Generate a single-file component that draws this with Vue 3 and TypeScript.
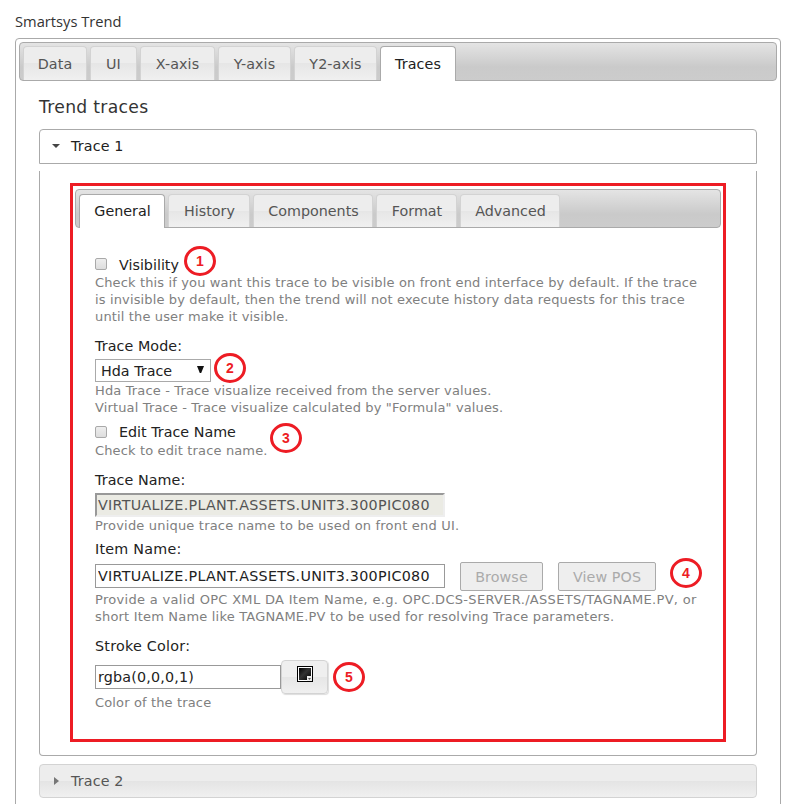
<script setup lang="ts">
import { ref } from 'vue'

interface Tab {
  label: string
  width: number
}

interface Marker {
  id: number
  left: number
  top: number
}

const mainTabs: Tab[] = [
  { label: 'Data', width: 64 },
  { label: 'UI', width: 47 },
  { label: 'X-axis', width: 75 },
  { label: 'Y-axis', width: 73 },
  { label: 'Y2-axis', width: 83 },
  { label: 'Traces', width: 76 },
]
const traceTabs: Tab[] = [
  { label: 'General', width: 86 },
  { label: 'History', width: 82 },
  { label: 'Components', width: 120 },
  { label: 'Format', width: 81 },
  { label: 'Advanced', width: 100 },
]
const markers: Marker[] = [
  { id: 1, left: 111, top: 60 },
  { id: 2, left: 141, top: 167 },
  { id: 3, left: 197, top: 237 },
  { id: 4, left: 597, top: 372 },
  { id: 5, left: 260, top: 476 },
]

const activeMain = ref('Traces')
const activeTrace = ref('General')
const visible = ref(false)
const editName = ref(false)
const traceName = ref('VIRTUALIZE.PLANT.ASSETS.UNIT3.300PIC080')
const itemName = ref('VIRTUALIZE.PLANT.ASSETS.UNIT3.300PIC080')
const strokeColor = ref('rgba(0,0,0,1)')
</script>

<template>
  <div class="page">
    <div class="title">Smartsys Trend</div>
    <div class="panel">
      <div class="tabs">
        <div
          v-for="t in mainTabs"
          :key="t.label"
          class="tab"
          :class="{ active: t.label === activeMain }"
          :style="{ width: t.width + 'px' }"
          @click="activeMain = t.label"
        >{{ t.label }}</div>
      </div>
      <div class="body">
        <h2 class="heading">Trend traces</h2>
        <div class="acc-head open">
          <svg class="arrow" width="8" height="4" viewBox="0 0 8 4"><path d="M0 0h8L4 4z" fill="#454545" /></svg>
          <span>Trace 1</span>
        </div>
        <div class="acc-body">
          <div class="frame">
            <div class="tabs">
              <div
                v-for="t in traceTabs"
                :key="t.label"
                class="tab"
                :class="{ active: t.label === activeTrace }"
                :style="{ width: t.width + 'px' }"
                @click="activeTrace = t.label"
              >{{ t.label }}</div>
            </div>
            <div class="form">
              <label class="check"><input v-model="visible" type="checkbox"><span>Visibility</span></label>
              <p class="hint">
                Check this if you want this trace to be visible on front end interface by default. If the trace<br>
                is invisible by default, then the trend will not execute history data requests for this trace<br>
                until the user make it visible.
              </p>
              <div class="label mode">Trace Mode:</div>
              <div class="select">
                <span>Hda Trace</span>
                <svg width="7" height="7" viewBox="0 0 7 7"><path d="M0 0h7L4.2 7H2.8z" fill="#111" /></svg>
              </div>
              <p class="hint">
                Hda Trace - Trace visualize received from the server values.<br>
                Virtual Trace - Trace visualize calculated by "Formula" values.
              </p>
              <label class="check edit"><input v-model="editName" type="checkbox"><span>Edit Trace Name</span></label>
              <p class="hint">Check to edit trace name.</p>
              <div class="label name">Trace Name:</div>
              <input v-model="traceName" class="text wide locked" type="text" disabled>
              <p class="hint mid">Provide unique trace name to be used on front end UI.</p>
              <div class="label item">Item Name:</div>
              <div class="row">
                <input v-model="itemName" class="text wide" type="text">
                <button class="btn browse" disabled>Browse</button>
                <button class="btn view" disabled>View POS</button>
              </div>
              <p class="hint mid">
                <span class="caps">Provide a valid OPC XML DA Item Name, e.g. OPC.DCS-SERVER./ASSETS/TAGNAME.PV, or</span><br>
                short Item Name like TAGNAME.PV to be used for resolving Trace parameters.
              </p>
              <div class="label stroke">Stroke Color:</div>
              <div class="color-row">
                <input v-model="strokeColor" class="text color" type="text">
                <button class="picker" aria-label="Pick color">
                  <svg width="16" height="16" viewBox="0 0 16 16">
                    <defs>
                      <linearGradient id="shade" x1="0" y1="0" x2="1" y2="1">
                        <stop offset="0" stop-color="#000" />
                        <stop offset=".45" stop-color="#333" />
                        <stop offset="1" stop-color="#000" />
                      </linearGradient>
                    </defs>
                    <path d="M0 0h16v16H0z" fill="#000" />
                    <path d="M1 1h14v14H1z" fill="#fff" />
                    <path d="M2 2h12v12H2z" fill="url(#shade)" />
                    <path d="M10 10h5v5h-5z" fill="#eee" />
                    <path d="M11 12h3l-1.5 2z" fill="#555" />
                  </svg>
                </button>
              </div>
              <p class="hint">Color of the trace</p>
            </div>
            <div
              v-for="m in markers"
              :key="m.id"
              class="marker"
              :style="{ left: m.left + 'px', top: m.top + 'px' }"
            >{{ m.id }}</div>
          </div>
        </div>
        <div class="acc-head">
          <svg class="arrow side" width="5" height="8" viewBox="0 0 5 8"><path d="M0 0l5 4-5 4z" fill="#777" /></svg>
          <span>Trace 2</span>
        </div>
      </div>
    </div>
  </div>
</template>

<style>
body {
  margin: 0;
  background: #fff;
  overflow: hidden;
}
</style>

<style scoped>
.page,
.page * {
  box-sizing: border-box;
}
.page {
  height: 804px;
  padding: 0 10px 0 15px;
  overflow: hidden;
  font: 14.3px/20px "DejaVu Sans", Verdana, sans-serif;
  color: #222;
}
.title {
  height: 38px;
  padding-top: 11px;
  font: 14.7px/20px "Open Sans", "Noto Sans", sans-serif;
  color: #333;
}
.panel {
  height: 820px;
  padding: 3px;
  border: 1px solid #aaa;
  border-radius: 4px;
}
.tabs {
  display: flex;
  align-items: flex-start;
  gap: 3px;
  height: 39px;
  padding: 3px 3px 0;
  border: 1px solid #aaa;
  border-radius: 4px;
  background: linear-gradient(#e4e4e4, #cacaca 65%, #cccccc);
}
.tab {
  flex: none;
  height: 34px;
  border: 1px solid #d3d3d3;
  border-bottom: 0;
  border-radius: 4px 4px 0 0;
  background: linear-gradient(#ededed 0 50%, #e6e6e6 50%, #f0f0f0);
  color: #555;
  letter-spacing: 0.1px;
  line-height: 34px;
  text-align: center;
  white-space: nowrap;
}
.tab.active {
  height: 35px;
  border-color: #aaa;
  background: #fff;
  color: #212121;
}
.body {
  padding: 15px 20px 0;
}
.heading {
  height: 33px;
  margin: 0;
  font-size: 17.2px;
  font-weight: 400;
  letter-spacing: 0.3px;
  line-height: 22px;
  color: #333;
}
.acc-head {
  display: flex;
  align-items: center;
  height: 34px;
  margin-top: 8px;
  padding-left: 12px;
  border: 1px solid #d3d3d3;
  border-radius: 4px;
  background: linear-gradient(#ededed 0 50%, #e4e4e4 50%, #f0f0f0);
  color: #555;
  letter-spacing: 0.15px;
}
.acc-head.open {
  height: 35px;
  margin: 0;
  padding-bottom: 1px;
  border-color: #aaa;
  border-radius: 4px 4px 0 0;
  background: #fff;
  color: #212121;
}
.arrow {
  margin-right: 11px;
}
.arrow.side {
  margin: 0 12px 0 2px;
}
.acc-body {
  height: 585px;
  margin-top: 7px;
  padding: 12px 30px 0;
  border: 1px solid #aaa;
  border-top: 0;
  border-radius: 0 0 4px 4px;
}
.frame {
  position: relative;
  height: 559px;
  padding: 3px 2px 0;
  border: 3px solid #ed1c24;
}
.frame .tabs {
  padding-top: 4px;
}
.frame .tab {
  height: 33px;
  padding-left: 1px;
  letter-spacing: 0;
  line-height: 32px;
}
.frame .tab.active {
  height: 34px;
}
.form {
  padding: 27px 20px 0;
}
.check {
  display: flex;
  align-items: center;
  height: 19px;
  padding-bottom: 2px;
}
.check input {
  appearance: none;
  width: 12px;
  height: 12px;
  margin: 0 12px 0 0;
  border: 1px solid #a9a9a9;
  border-radius: 2px;
  background: linear-gradient(#eee, #ddd);
}
.check.edit {
  height: 20px;
  margin-top: 6px;
  padding: 0;
}
.check span {
  padding-top: 2px;
}
.check.edit span {
  padding: 0;
}
.hint {
  margin: 0;
  font-size: 13px;
  letter-spacing: 0.14px;
  line-height: 17px;
  color: #808080;
  white-space: nowrap;
}
.hint.mid {
  letter-spacing: 0.19px;
}
.hint .caps {
  letter-spacing: 0.31px;
}
.label {
  height: 20px;
  letter-spacing: 0.08px;
}
.mode {
  height: 23px;
  margin-top: 11px;
}
.name {
  height: 23px;
  margin-top: 11px;
}
.item {
  height: 23px;
  margin-top: 5px;
  letter-spacing: 0.25px;
}
.stroke {
  height: 24px;
  margin-top: 11px;
  letter-spacing: 0.25px;
}
.select {
  display: flex;
  align-items: center;
  justify-content: space-between;
  width: 116px;
  height: 23px;
  padding: 0 5px;
  border: 1px solid #aaa;
  color: #222;
}
.select svg {
  margin: 0 1px 2px 0;
}
.text {
  display: block;
  flex: none;
  height: 24px;
  margin: 0;
  padding: 0 2px;
  border: 1px solid #999;
  border-radius: 0;
  background: #fff;
  color: #222;
  font: inherit;
  letter-spacing: 0.18px;
}
.wide {
  width: 350px;
  letter-spacing: 0.28px;
}
.locked {
  border: 2px solid #eee;
  border-top-color: #999;
  border-left-color: #999;
  padding: 0 1px;
  background: #ebebe4;
  color: #545454;
}
.row {
  display: flex;
  align-items: center;
  height: 29px;
}
.row .text {
  margin-bottom: 1px;
}
.btn {
  height: 29px;
  margin: 0 0 0 15px;
  padding: 0;
  border: 1px solid #aaa;
  border-radius: 2px;
  background: #eee;
  color: #aaa;
  font: inherit;
  letter-spacing: 0.1px;
}
.browse {
  width: 83px;
}
.view {
  width: 98px;
}
.color-row {
  display: flex;
  align-items: center;
  height: 34px;
}
.color {
  width: 186px;
}
.picker {
  width: 47px;
  height: 34px;
  padding: 0 0 6px;
  border: 1px solid #d3d3d3;
  border-radius: 4px;
  background: linear-gradient(#efefef 0 50%, #e6e6e6 50%, #f0f0f0);
  box-shadow: 1px 1px 1px #ddd;
}
.picker svg {
  display: block;
  margin: 0 auto;
}
.marker {
  position: absolute;
  width: 32px;
  height: 30px;
  border: 3px solid #ed1c24;
  border-radius: 50%;
  color: #ed1c24;
  font: bold 14px/25px "Liberation Sans", Arial, sans-serif;
  text-align: center;
}
</style>
